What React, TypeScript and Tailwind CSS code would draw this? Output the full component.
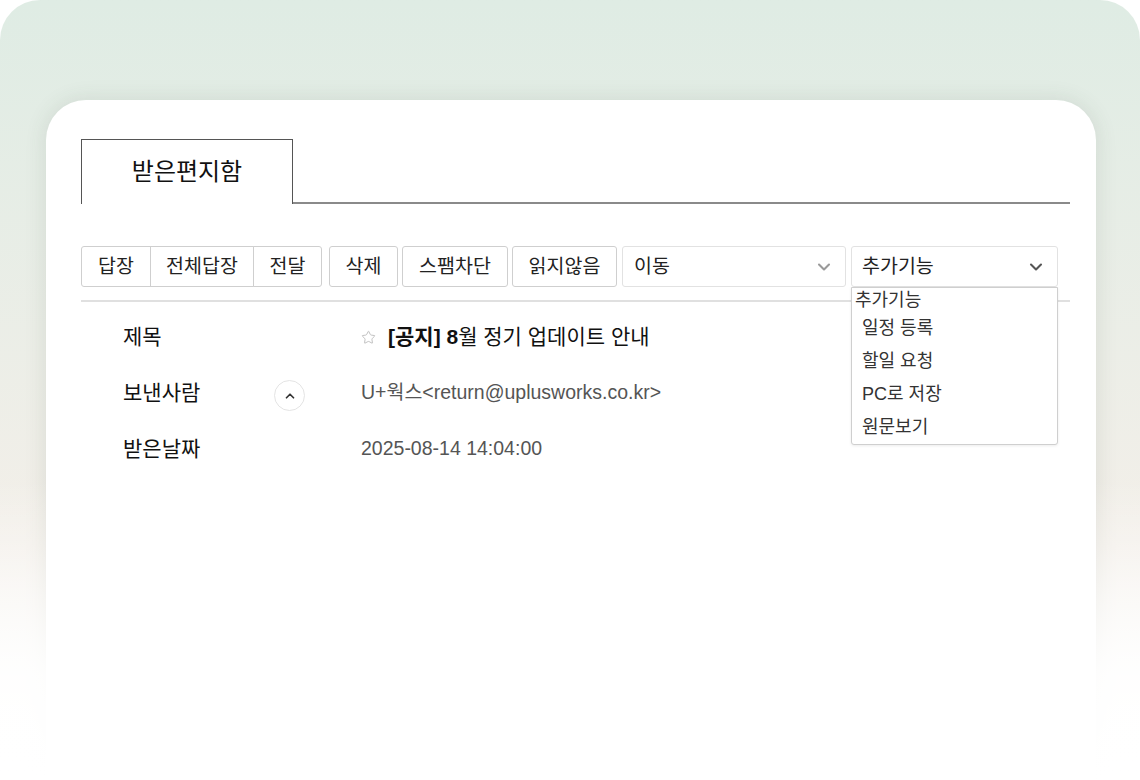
import { ChevronDown, ChevronUp, Star } from 'lucide-react';

const FONT = '"Liberation Sans", "Noto Sans CJK KR", sans-serif';

const GROUP = [
  { label: '답장', w: 'w-[70px]' },
  { label: '전체답장', w: 'w-[104px]' },
  { label: '전달', w: 'w-[69px]' },
];

const MENU_ITEMS = ['일정 등록', '할일 요청', 'PC로 저장', '원문보기'];

function Btn({ label, className }: { label: string; className: string }) {
  return (
    <button
      type="button"
      className={`h-[41px] rounded-[3px] border border-[#cfcfcf] bg-white text-[19.5px] text-[#222] ${className}`}
    >
      {label}
    </button>
  );
}

function InfoRow({ label, children, toggle }: { label: string; children: React.ReactNode; toggle?: boolean }) {
  return (
    <div className="flex h-[56px] items-center">
      <div className="w-[193px] pl-[42px] text-[21px] text-[#111]">{label}</div>
      <div className="flex w-[31px] items-center justify-center">
        {toggle && (
          <span className="mt-[5px] flex h-[31px] w-[31px] items-center justify-center rounded-full border border-[#e4e4e4] bg-white">
            <ChevronUp size={14} strokeWidth={3} className="text-[#333]" />
          </span>
        )}
      </div>
      <div className="ml-[56px] flex items-center text-[19.5px] text-[#555]">{children}</div>
    </div>
  );
}

export default function App() {
  return (
    <div className="relative h-[780px] w-[1140px] overflow-hidden bg-white" style={{ fontFamily: FONT }}>
      <div className="h-full rounded-t-[40px] bg-gradient-to-b from-[#dfece4] via-[#f3efe9] via-70% to-white pl-[46px] pr-[44px] pt-[100px]">
        <div className="h-full rounded-t-[40px] bg-white pl-[35px] pr-[26px] pt-[39px] shadow-[0_0_22px_rgba(60,70,60,0.12)]">
          {/* tab */}
          <div className="flex h-[65px]">
            <div className="flex w-[212px] items-center justify-center border-l border-r border-t border-[#555] text-[24px] text-[#111]">
              받은편지함
            </div>
            <div className="flex-1 border-b-2 border-[#8a8a8a]" />
          </div>

          {/* toolbar */}
          <div className="relative mt-[42px] flex items-center">
            <div className="flex">
              {GROUP.map((g, i) => (
                <Btn
                  key={g.label}
                  label={g.label}
                  className={`${g.w} ${i > 0 ? '-ml-px' : ''} ${i === 0 ? 'rounded-r-none' : i === GROUP.length - 1 ? 'rounded-l-none' : 'rounded-none'}`}
                />
              ))}
            </div>
            <Btn label="삭제" className="ml-[7px] w-[69px]" />
            <Btn label="스팸차단" className="ml-[4px] w-[106px]" />
            <Btn label="읽지않음" className="ml-[4px] w-[105px]" />
            <div className="ml-[5px] flex h-[41px] w-[224px] items-center justify-between rounded-[3px] border border-[#e2e2e2] pl-[11px] pr-[11px] text-[19.5px] text-[#222]">
              <span>이동</span>
              <ChevronDown size={20} strokeWidth={2.5} className="text-[#9a9a9a]" />
            </div>
            <div className="relative ml-[5px]">
              <div className="flex h-[41px] w-[207px] items-center justify-between rounded-[3px] border border-[#e2e2e2] pl-[10px] pr-[11px] text-[19.5px] text-[#222]">
                <span>추가기능</span>
                <ChevronDown size={20} strokeWidth={2.5} className="text-[#555]" />
              </div>
              <div className="absolute left-0 top-[41px] z-10 h-[158px] w-[207px] rounded-b-[3px] border border-[#cfcfcf] bg-white shadow-[0_1px_3px_rgba(0,0,0,0.08)]">
                <div className="pl-[3px] pt-[1px] text-[18px] leading-[23px] text-[#333]">추가기능</div>
                {MENU_ITEMS.map((m) => (
                  <div key={m} className="pl-[10px] text-[18px] leading-[33px] text-[#333]">
                    {m}
                  </div>
                ))}
              </div>
            </div>
          </div>

          <div className="mt-[13px] h-[2px] bg-[#e0e0e0]" />

          {/* header info */}
          <div className="mt-[7px]">
            <InfoRow label="제목">
              <Star size={15} strokeWidth={1.5} className="mr-[12px] text-[#bdbdbd]" />
              <span className="text-[21px] text-[#111]">
                <b>[공지] 8</b>월 정기 업데이트 안내
              </span>
            </InfoRow>
            <InfoRow label="보낸사람" toggle>
              U+웍스&lt;return@uplusworks.co.kr&gt;
            </InfoRow>
            <InfoRow label="받은날짜">2025-08-14 14:04:00</InfoRow>
          </div>
        </div>
      </div>
      {/* fade to white at bottom */}
      <div className="pointer-events-none absolute bottom-0 left-0 h-[300px] w-full bg-gradient-to-b from-transparent via-white/90 via-65% to-white" />
    </div>
  );
}
